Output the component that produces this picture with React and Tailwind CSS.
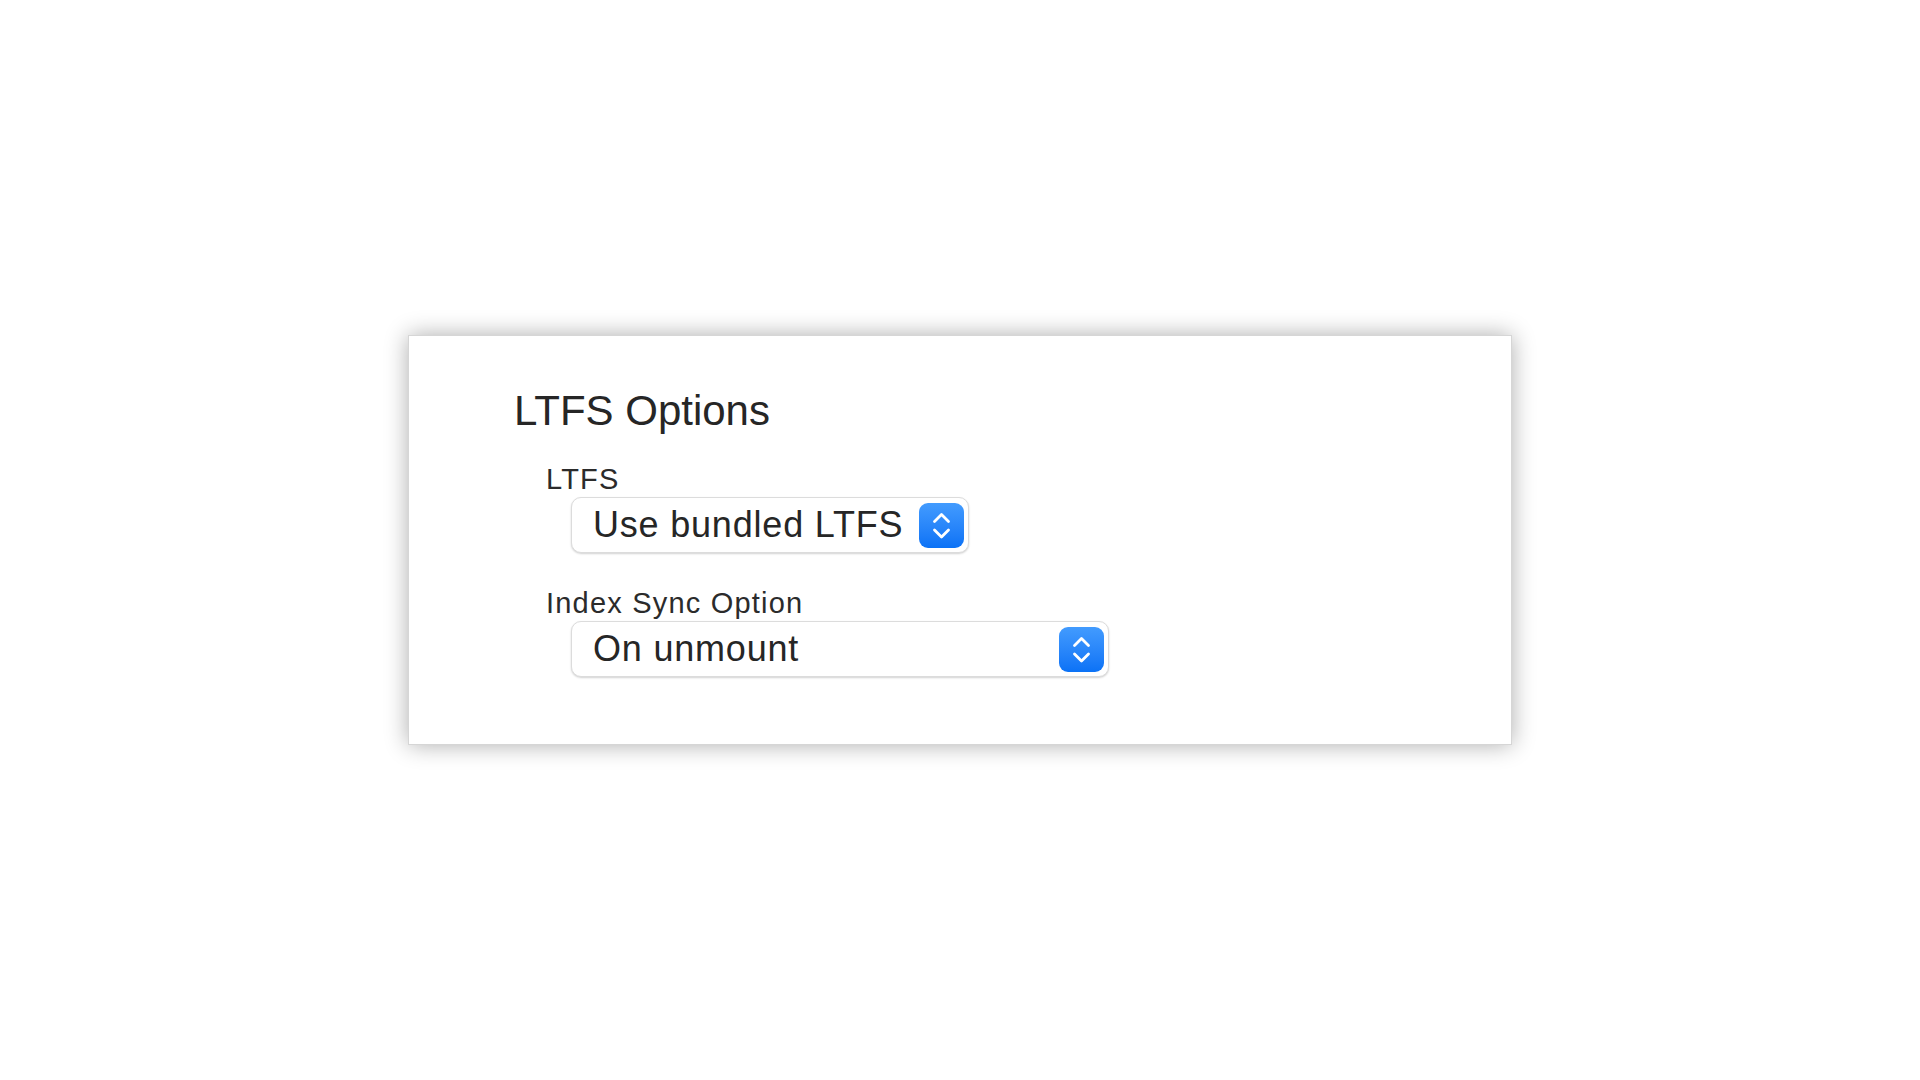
import React from "react";

function Stepper() {
    return (
        <div className="w-[45px] h-[45px] rounded-[9px] bg-gradient-to-b from-[#429bfe] to-[#0a72f6] flex items-center justify-center shrink-0">
            <svg width="45" height="45" viewBox="0 0 45 45" fill="none">
                <path d="M15.5 18.5 L22.5 11.5 L29.5 18.5" stroke="#fff" strokeWidth="2.8" strokeLinecap="round" strokeLinejoin="round" />
                <path d="M15.5 27 L22.5 34 L29.5 27" stroke="#fff" strokeWidth="2.8" strokeLinecap="round" strokeLinejoin="round" />
            </svg>
        </div>
    );
}

function PopUp({ label, value, width }) {
    return (
        <div className="flex flex-col">
            <div className="ml-[137px] text-[29px] leading-[28px] tracking-[1.2px] text-[#2b2b2b]">{label}</div>
            <div
                className={`ml-[162px] mt-[4px] h-[56px] ${width} bg-white border border-[#dcdcdc] rounded-[10px] shadow-[0_1px_2px_rgba(0,0,0,0.18)] flex items-center justify-between pl-[21px] pr-[4px]`}
            >
                <span className="text-[36px] leading-[36px] tracking-[0.8px] text-[#262626]">{value}</span>
                <Stepper />
            </div>
        </div>
    );
}

export default function App() {
    return (
        <div
            className="w-full h-screen bg-white flex items-center justify-center"
            style={{ fontFamily: '"Liberation Sans", Arial, sans-serif' }}
        >
            <div className="w-[1104px] h-[410px] bg-white border border-[#d6d6d6] shadow-[0_0_22px_rgba(0,0,0,0.32)] pt-[54px]">
                <h1 className="ml-[105px] text-[42px] leading-[41px] text-[#262626]">LTFS Options</h1>
                <div className="mt-[34px]">
                    <PopUp label="LTFS" value="Use bundled LTFS" width="w-[398px]" />
                </div>
                <div className="mt-[36px]">
                    <PopUp label="Index Sync Option" value="On unmount" width="w-[538px]" />
                </div>
            </div>
        </div>
    );
}
